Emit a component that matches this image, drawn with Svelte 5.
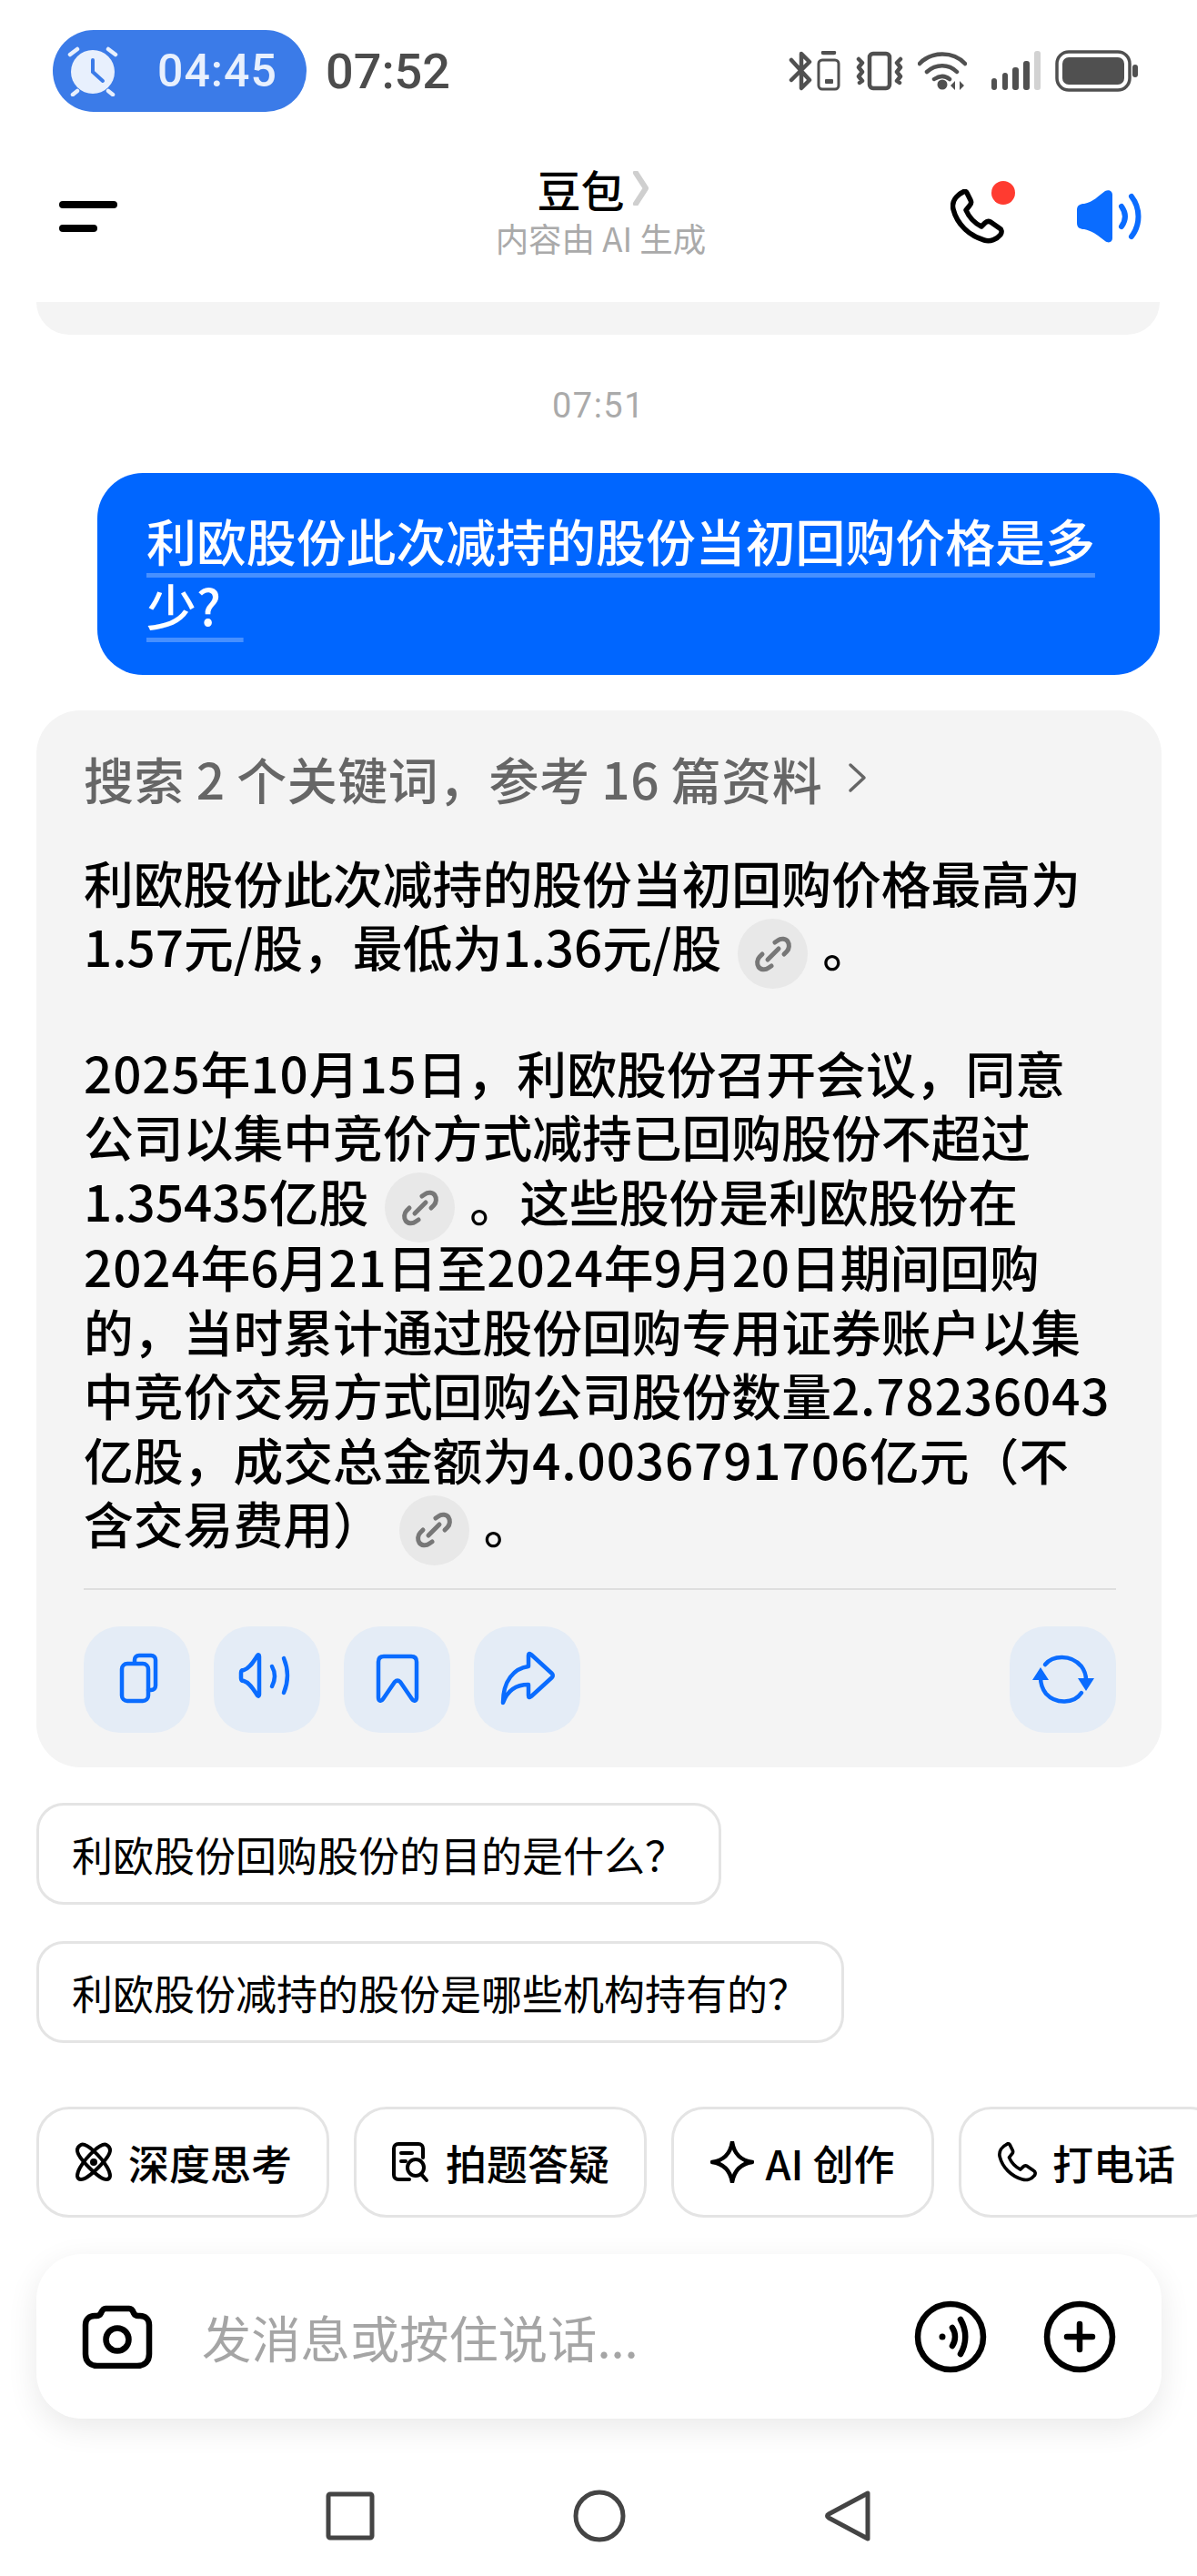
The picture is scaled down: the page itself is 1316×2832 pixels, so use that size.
<script>
  const actionsLeft = ["copy", "sound", "mark", "share"];
</script>

<div class="phone">
  <div class="status">
    <div class="pill">
      <svg width="56" height="56" viewBox="0 0 56 56">
        <circle cx="28" cy="29" r="24" fill="#e8f0fd" />
        <path d="M28 16v13l11 10" fill="none" stroke="#3b7be8" stroke-width="4" stroke-linecap="round" />
        <path d="M3 10l8-6M53 10l-8-6M11 50l-5 4M45 50l5 4" stroke="#e8f0fd" stroke-width="4.5" stroke-linecap="round" />
      </svg>
      <span class="alarm-time">04:45</span>
    </div>
    <span class="clock">07:52</span>
    <div class="status-icons">
      <svg width="58" height="44" viewBox="0 0 58 44" fill="none" stroke="#505050" stroke-width="4.5" stroke-linecap="round" stroke-linejoin="round">
        <path d="M3 10l20 22-9 9V3l9 9L3 32" />
        <rect x="33" y="10" width="22" height="32" rx="4" stroke-width="3" />
        <path d="M38 2h12" />
        <rect x="40" y="31" width="9" height="5" rx="1" fill="#505050" stroke="none" />
      </svg>
      <svg width="52" height="44" viewBox="0 0 52 44" fill="none" stroke="#505050" stroke-width="4.5" stroke-linecap="round" stroke-linejoin="round">
        <rect x="15" y="3" width="22" height="38" rx="4" />
        <path d="M3 9l4 4-4 5 4 5-4 5 4 5-3 2M49 9l-4 4 4 5-4 5 4 5-4 5 3 2" />
      </svg>
      <svg width="54" height="44" viewBox="0 0 54 44" fill="none" stroke="#505050" stroke-width="4.5" stroke-linecap="round">
        <path d="M2 14C15 0 39 0 52 14M10 23c10-9 24-9 33 0M18 31c6-4 12-4 17 0" />
        <circle cx="27" cy="37" r="5.5" fill="#505050" stroke="none" />
        <path d="M41 33l-5 5 5 5zM46 33l5 5-5 5z" fill="#505050" stroke="none" />
      </svg>
      <svg class="signal" width="54" height="44" viewBox="0 0 54 44">
        <rect x="0" y="30" width="6" height="13" rx="3" fill="#505050" />
        <rect x="12" y="24" width="6" height="19" rx="3" fill="#505050" />
        <rect x="23" y="18" width="7" height="25" rx="3" fill="#505050" />
        <rect x="35" y="11" width="7" height="32" rx="3" fill="#505050" />
        <rect x="47" y="0" width="7" height="43" rx="3" fill="#d2d2d2" />
      </svg>
      <svg width="92" height="46" viewBox="0 0 92 46">
        <rect x="2" y="2" width="80" height="42" rx="13" fill="none" stroke="#505050" stroke-width="3.5" />
        <rect x="8" y="8" width="68" height="30" rx="7" fill="#505050" />
        <rect x="85" y="16" width="6" height="14" rx="3" fill="#505050" />
      </svg>
    </div>
  </div>

  <header class="topbar">
    <div class="menu"><i class="long"></i><i class="short"></i></div>
    <div class="title">
      <div class="name">豆包<svg width="20" height="38" viewBox="0 0 20 38"><path d="M4 2l11 17L4 36" fill="none" stroke="#cfcfcf" stroke-width="6" stroke-linecap="round" stroke-linejoin="round" /></svg></div>
      <div class="sub">内容由 AI 生成</div>
    </div>
    <div class="top-actions">
      <div class="call">
        <svg width="60" height="60" viewBox="0 0 60 60"><path d="M14 3C6 7 1 14 3 22c4 16 17 29 34 34 7 2 14-1 18-6 2-3 1-6-1-7l-10-7c-2-1-4-1-6 1l-4 4c-8-4-14-11-17-18l4-5c2-2 2-4 1-6l-4-8c-1-2-3-2-4-1z" fill="none" stroke="#000" stroke-width="5.5" stroke-linejoin="round" /></svg>
        <b class="dot"></b>
      </div>
      <svg width="72" height="58" viewBox="0 0 72 58" fill="none"><path d="M0 22c0-5 3-7 8-7 10-2 16-9 23-14 4-2 8 0 8 4v48c0 4-4 6-8 3-7-5-13-11-23-13-5 0-8-2-8-7z" fill="#0a6cff" /><path d="M49 18c5 7 5 15 0 22M60 7c10 13 10 31 0 44" stroke="#0a6cff" stroke-width="6" stroke-linecap="round" /></svg>
    </div>
  </header>

  <div class="prev-stub"></div>
  <div class="stamp">07:51</div>

  <div class="bubble">
    <span class="ul">利欧股份此次减持的股份当初回购价格是多</span><br /><span class="ul">少?&nbsp;&nbsp;</span>
  </div>

  <section class="answer">
    <div class="search">
      <span>搜索 2 个关键词，参考 16 篇资料</span>
      <svg width="22" height="34" viewBox="0 0 22 34"><path d="M3 3l15 14L3 31" fill="none" stroke="#666" stroke-width="3.5" stroke-linecap="round" stroke-linejoin="round" /></svg>
    </div>

    <p class="first">
      利欧股份此次减持的股份当初回购价格最高为<br />
      1.57元/股，最低为1.36元/股{@render chip()}。
    </p>
    <p class="second">
      <span class="n">2025</span>年<span class="n">10</span>月<span class="n">15</span>日，利欧股份召开会议，同意<br />
      公司以集中竞价方式减持已回购股份不超过<br />
      1.35435亿股{@render chip()}。这些股份是利欧股份在<br />
      <span class="n">2024</span>年6月<span class="n">21</span>日至<span class="n">2024</span>年9月<span class="n">20</span>日期间回购<br />
      的，当时累计通过股份回购专用证券账户以集<br />
      中竞价交易方式回购公司股份数量<span class="n">2.78236043</span><br />
      亿股，成交总金额为<span class="n">4.0036791706</span>亿元（不<br />
      含交易费用）{@render chip()}。
    </p>

    <div class="rule"></div>

    <div class="actions">
      {#each actionsLeft as a}
        <button class="act">
          <svg width="64" height="64" viewBox="0 0 64 64" fill="none" stroke="#0a6cff" stroke-width="4.5" stroke-linecap="round" stroke-linejoin="round">
            {#if a === "copy"}
              <path d="M29 14v-3c0-3 2-5 5-5h13c3 0 5 2 5 5v28c0 3-2 5-5 5h-3" />
              <rect x="15" y="15" width="29" height="41" rx="6" />
            {:else if a === "sound"}
              <path d="M3 25c0-2 1-3 3-3 7-2 11-10 15-16 1-1 2-1 2 1v42c0 2-1 2-2 1-4-6-8-14-15-16-2 0-3-1-3-3z" />
              <path d="M37 18c4 7 4 14 0 22M50 9c5 12 5 26 0 38" />
            {:else if a === "mark"}
              <path d="M11 13c0-4 2-6 6-6h30c4 0 6 2 6 6v39c0 4-3 5-5 2l-13-19c-2-2-4-2-6 0L16 54c-2 3-5 2-5-2z" />
            {:else}
              <path d="M33 6v12C17 20 5 34 5 58c5-14 15-20 28-20v12c0 2 1 3 3 1l23-21c1-1 1-3 0-4L36 5c-2-2-3-1-3 1z" />
            {/if}
          </svg>
        </button>
      {/each}
      <button class="act refresh">
        <svg width="68" height="64" viewBox="0 0 68 64" fill="none" stroke="#0a6cff" stroke-width="4.5" stroke-linecap="round">
          <path d="M14 16C22 6 42 4 54 18c3 4 5 9 5 15" />
          <path d="M9 30c0 7 2 13 6 18 11 12 31 11 39-1" />
          <path d="M50 31h18L59 45zM0 33h18L9 19z" fill="#0a6cff" stroke="none" />
        </svg>
      </button>
    </div>
  </section>

  <div class="suggests">
    <div class="suggest">利欧股份回购股份的目的是什么？</div>
    <div class="suggest">利欧股份减持的股份是哪些机构持有的？</div>
  </div>

  <div class="quick">
    <div class="q q1">
      <svg width="44" height="44" viewBox="0 0 44 44" fill="none" stroke="#000" stroke-width="4"><path d="M8 3c6-3 22 13 29 25 5 9 3 13-1 13C28 41 4 17 4 9c0-3 2-5 4-6z" /><path d="M36 3c-6-3-22 13-29 25-5 9-3 13 1 13 8 0 32-24 32-32 0-3-2-5-4-6z" /><circle cx="22" cy="22" r="4" fill="#000" stroke="none" /></svg>
      <span>深度思考</span>
    </div>
    <div class="q q2">
      <svg width="44" height="46" viewBox="0 0 44 46" fill="none" stroke="#000" stroke-width="4" stroke-linecap="round" stroke-linejoin="round"><path d="M20 42H8c-3 0-5-2-5-5V8c0-3 2-5 5-5h22c3 0 5 2 5 5v10" /><path d="M11 13h12M11 22h5" /><circle cx="27" cy="29" r="9" /><path d="M33 36l6 7" /></svg>
      <span>拍题答疑</span>
    </div>
    <div class="q q3">
      <svg width="48" height="46" viewBox="0 0 48 46"><path d="M24 1c2 12 8 20 22 22-14 2-20 10-22 22-2-12-8-20-22-22C16 21 22 13 24 1z" fill="none" stroke="#000" stroke-width="4.5" stroke-linejoin="round" /></svg>
      <span>AI 创作</span>
    </div>
    <div class="q q4">
      <svg width="44" height="44" viewBox="0 0 60 60"><path d="M14 3C6 7 1 14 3 22c4 16 17 29 34 34 7 2 14-1 18-6 2-3 1-6-1-7l-10-7c-2-1-4-1-6 1l-4 4c-8-4-14-11-17-18l4-5c2-2 2-4 1-6l-4-8c-1-2-3-2-4-1z" fill="none" stroke="#000" stroke-width="5" stroke-linejoin="round" /></svg>
      <span>打电话</span>
    </div>
  </div>

  <div class="inputbar">
    <svg width="78" height="70" viewBox="0 0 78 70" fill="none" stroke="#000" stroke-width="6.5" stroke-linejoin="round"><path d="M26 4h26c3 0 4 2 5 5 1 2 2 3 5 3h2c6 0 10 4 10 10v32c0 8-5 13-13 13H17c-8 0-13-5-13-13V22c0-6 4-10 10-10h2c3 0 4-1 5-3s2-5 5-5z" /><circle cx="39" cy="38" r="12.5" /></svg>
    <span class="placeholder">发消息或按住说话...</span>
    <svg class="voice" width="80" height="80" viewBox="0 0 80 80" fill="none" stroke="#000" stroke-width="6.5" stroke-linecap="round"><circle cx="40" cy="40" r="36" /><path d="M42 30c4 6 4 14 0 20M51 21c7 12 7 26 0 38" /><circle cx="31" cy="40" r="3.5" fill="#000" stroke="none" /></svg>
    <svg width="80" height="80" viewBox="0 0 80 80" fill="none" stroke="#000" stroke-width="6.5" stroke-linecap="round"><circle cx="40" cy="40" r="36" /><path d="M26 40h28M40 26v28" /></svg>
  </div>

  <nav class="nav">
    <svg width="54" height="54" viewBox="0 0 54 54"><rect x="3" y="3" width="48" height="48" rx="2" fill="none" stroke="#444" stroke-width="5" /></svg>
    <svg width="58" height="58" viewBox="0 0 58 58"><circle cx="29" cy="29" r="26" fill="none" stroke="#444" stroke-width="5" /></svg>
    <svg width="52" height="58" viewBox="0 0 52 58"><path d="M48 4v50L5 31c-2-1-2-3 0-4z" fill="none" stroke="#444" stroke-width="5" stroke-linejoin="round" /></svg>
  </nav>
</div>

{#snippet chip()}
  <span class="chip">
    <svg width="44" height="44" viewBox="0 0 44 44" fill="none" stroke="#777" stroke-width="5" stroke-linecap="round"><path d="M24 9l3-2c4-3 9-2 11 1s2 8-1 11l-3 3" /><path d="M20 35l-3 2c-4 3-9 2-11-1s-2-8 1-11l3-3" /><path d="M16 28l12-12" /></svg>
  </span>
{/snippet}

<style>
  :global(body) {
    margin: 0;
    background: #fff;
  }

  .phone {
    width: 1316px;
    height: 2832px;
    overflow: hidden;
    background: #fff;
    display: flex;
    flex-direction: column;
    font-family: "Noto Sans CJK SC", "Noto Sans", sans-serif;
    color: #000;
  }

  .status {
    display: flex;
    align-items: center;
    height: 90px;
    margin-top: 33px;
    padding: 0 64px 0 58px;
  }

  .pill {
    width: 279px;
    height: 90px;
    box-sizing: border-box;
    border-radius: 45px;
    background: #3b7be8;
    display: flex;
    align-items: center;
    padding-left: 16px;
    gap: 43px;
  }

  .alarm-time {
    font-family: Roboto, sans-serif;
    font-weight: 500;
    font-size: 50px;
    color: #e8f0fd;
    letter-spacing: 1px;
  }

  .clock {
    margin-left: 21px;
    font-family: Roboto, sans-serif;
    font-weight: 500;
    font-size: 54px;
    color: #4c4c4c;
  }

  .status-icons {
    margin-left: auto;
    display: flex;
    align-items: center;
    gap: 16px;
  }

  .signal {
    margin-left: 11px;
  }

  .topbar {
    display: grid;
    grid-template-columns: 1fr auto 1fr;
    align-items: center;
    height: 209px;
    box-sizing: border-box;
    padding: 58px 60px 52px 65px;
  }

  .menu {
    display: flex;
    flex-direction: column;
    gap: 18px;
    margin-top: 7px;
  }

  .menu i {
    display: block;
    height: 8px;
    border-radius: 4px;
    background: #000;
  }

  .menu .long {
    width: 64px;
  }

  .menu .short {
    width: 42px;
  }

  .title {
    text-align: center;
  }

  .name {
    display: flex;
    justify-content: center;
    align-items: center;
    gap: 8px;
    font-size: 48px;
    font-weight: 500;
    line-height: 52px;
    padding-right: 16px;
  }

  .sub {
    margin-top: 4px;
    font-size: 36.5px;
    line-height: 50px;
    color: #aaa;
  }

  .top-actions {
    margin-top: 7px;
    display: flex;
    justify-content: flex-end;
    align-items: center;
    gap: 79px;
  }

  .call {
    position: relative;
    height: 60px;
  }

  .dot {
    position: absolute;
    top: -9px;
    right: -11px;
    width: 26px;
    height: 26px;
    border-radius: 50%;
    background: #ff3b30;
  }

  .prev-stub {
    height: 36px;
    margin: 0 41px 0 40px;
    background: #f4f4f4;
    border-radius: 0 0 48px 48px;
    flex: none;
  }

  .stamp {
    margin-top: 53px;
    text-align: center;
    font-family: Roboto, sans-serif;
    font-size: 38px;
    line-height: 50px;
    color: #aaa;
    letter-spacing: 1.5px;
  }

  .bubble {
    flex: none;
    margin: 49px 41px 0 107px;
    height: 222px;
    box-sizing: border-box;
    padding: 38px 40px 0 54px;
    border-radius: 50px;
    background: #0066ff;
    color: #fff;
    font-size: 54.9px;
    font-weight: 500;
    line-height: 71px;
    white-space: nowrap;
  }

  .ul {
    text-decoration: underline;
    text-decoration-color: rgba(255, 255, 255, 0.28);
    text-decoration-thickness: 5px;
    text-underline-offset: 13px;
    text-decoration-skip-ink: none;
  }

  .answer {
    flex: none;
    margin: 39px 39px 0 40px;
    padding: 44px 50px 36px 52px;
    background: #f4f4f4;
    border-radius: 48px;
    height: 1162px;
    box-sizing: border-box;
  }

  .search {
    display: flex;
    align-items: center;
    gap: 28px;
    height: 60px;
    font-size: 55px;
    font-weight: 500;
    letter-spacing: 0.45px;
    color: #666;
    white-space: nowrap;
  }

  p {
    margin: 0;
    font-size: 54.8px;
    font-weight: 500;
    line-height: 70.4px;
    white-space: nowrap;
  }

  .n {
    letter-spacing: 0.9px;
  }

  .first {
    margin-top: 49px;
  }

  .second {
    margin-top: 66px;
  }

  .chip {
    display: inline-flex;
    align-items: center;
    justify-content: center;
    width: 77px;
    height: 77px;
    margin: -10px 16px -10px 18px;
    border-radius: 50%;
    background: #e8e8e8;
    vertical-align: middle;
  }

  .rule {
    height: 2px;
    background: #dedede;
    margin-top: 35px;
  }

  .actions {
    display: flex;
    gap: 26px;
    margin-top: 40px;
  }

  .act {
    width: 117px;
    height: 117px;
    padding: 0;
    border: none;
    border-radius: 40px;
    background: #e4ecf6;
    display: flex;
    align-items: center;
    justify-content: center;
  }

  .refresh {
    margin-left: auto;
  }

  .suggests {
    display: flex;
    flex-direction: column;
    align-items: flex-start;
    gap: 40px;
    margin: 39px 0 0 40px;
  }

  .suggest {
    height: 112px;
    box-sizing: border-box;
    border: 3px solid #e4e4e4;
    border-radius: 30px;
    padding: 0 36px;
    display: flex;
    align-items: center;
    font-size: 45px;
    white-space: nowrap;
  }

  .quick {
    flex: none;
    display: flex;
    gap: 27px;
    margin-top: 70px;
    padding-left: 40px;
  }

  .q {
    flex: none;
    height: 122px;
    box-sizing: border-box;
    border: 3px solid #e4e4e4;
    border-radius: 36px;
    display: flex;
    align-items: center;
    justify-content: center;
    gap: 16px;
    font-size: 45px;
    font-weight: 500;
    white-space: nowrap;
  }

  .q1,
  .q2 {
    width: 322px;
  }

  .q3 {
    width: 289px;
    gap: 12px;
  }

  .q4 {
    width: 290px;
    justify-content: flex-start;
    padding-left: 40px;
  }

  .inputbar {
    flex: none;
    display: flex;
    align-items: center;
    height: 181px;
    box-sizing: border-box;
    margin: 40px 39px 0 40px;
    padding: 0 50px;
    background: #fff;
    border-radius: 50px;
    box-shadow: 0 10px 34px rgba(0, 0, 0, 0.09);
  }

  .placeholder {
    margin-left: 54px;
    font-size: 54.3px;
    color: #a5a5a5;
    white-space: nowrap;
  }

  .voice {
    margin-left: auto;
    margin-right: 62px;
  }

  .nav {
    flex: none;
    display: flex;
    align-items: center;
    justify-content: center;
    gap: 218px;
    margin-top: 78px;
  }
</style>
